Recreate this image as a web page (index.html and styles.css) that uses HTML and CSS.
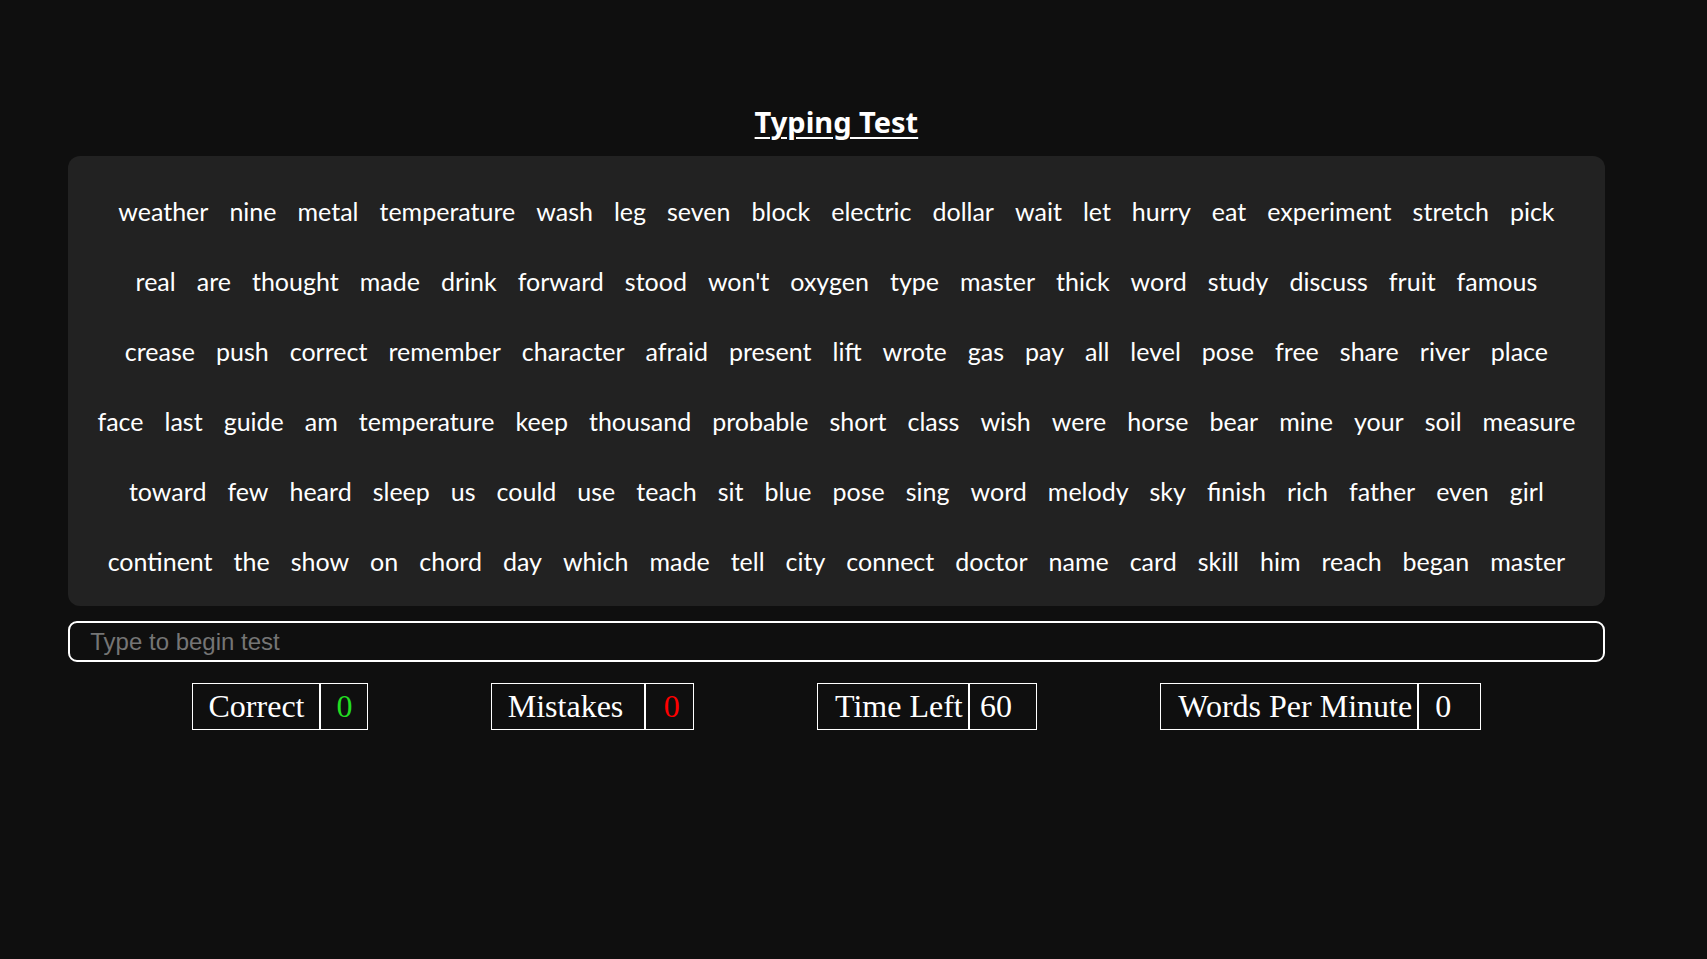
FILE: index.html
```html
<!DOCTYPE html>
<html lang="en">
<head>
<meta charset="utf-8">
<title>Typing Test</title>
<link rel="stylesheet" href="styles.css">
</head>
<body>
<main class="app">
  <h1 class="title">Typing Test</h1>
  <div class="words">
    <span class="word">weather</span><span class="word">nine</span><span class="word">metal</span><span class="word">temperature</span><span class="word">wash</span><span class="word">leg</span><span class="word">seven</span><span class="word">block</span><span class="word">electric</span><span class="word">dollar</span><span class="word">wait</span><span class="word">let</span><span class="word">hurry</span><span class="word">eat</span><span class="word">experiment</span><span class="word">stretch</span><span class="word">pick</span>
    <span class="word">real</span><span class="word">are</span><span class="word">thought</span><span class="word">made</span><span class="word">drink</span><span class="word">forward</span><span class="word">stood</span><span class="word">won't</span><span class="word">oxygen</span><span class="word">type</span><span class="word">master</span><span class="word">thick</span><span class="word">word</span><span class="word">study</span><span class="word">discuss</span><span class="word">fruit</span><span class="word">famous</span>
    <span class="word">crease</span><span class="word">push</span><span class="word">correct</span><span class="word">remember</span><span class="word">character</span><span class="word">afraid</span><span class="word">present</span><span class="word">lift</span><span class="word">wrote</span><span class="word">gas</span><span class="word">pay</span><span class="word">all</span><span class="word">level</span><span class="word">pose</span><span class="word">free</span><span class="word">share</span><span class="word">river</span><span class="word">place</span>
    <span class="word">face</span><span class="word">last</span><span class="word">guide</span><span class="word">am</span><span class="word">temperature</span><span class="word">keep</span><span class="word">thousand</span><span class="word">probable</span><span class="word">short</span><span class="word">class</span><span class="word">wish</span><span class="word">were</span><span class="word">horse</span><span class="word">bear</span><span class="word">mine</span><span class="word">your</span><span class="word">soil</span><span class="word">measure</span>
    <span class="word">toward</span><span class="word">few</span><span class="word">heard</span><span class="word">sleep</span><span class="word">us</span><span class="word">could</span><span class="word">use</span><span class="word">teach</span><span class="word">sit</span><span class="word">blue</span><span class="word">pose</span><span class="word">sing</span><span class="word">word</span><span class="word">melody</span><span class="word">sky</span><span class="word">finish</span><span class="word">rich</span><span class="word">father</span><span class="word">even</span><span class="word">girl</span>
    <span class="word">continent</span><span class="word">the</span><span class="word">show</span><span class="word">on</span><span class="word">chord</span><span class="word">day</span><span class="word">which</span><span class="word">made</span><span class="word">tell</span><span class="word">city</span><span class="word">connect</span><span class="word">doctor</span><span class="word">name</span><span class="word">card</span><span class="word">skill</span><span class="word">him</span><span class="word">reach</span><span class="word">began</span><span class="word">master</span>
  </div>
  <input class="type-input" type="text" placeholder="Type to begin test">
  <div class="stats">
    <div class="stat stat-correct"><span class="stat-label">Correct</span><span class="stat-value good">0</span></div>
    <div class="stat stat-mistakes"><span class="stat-label">Mistakes</span><span class="stat-value bad">0</span></div>
    <div class="stat stat-time"><span class="stat-label">Time Left</span><span class="stat-value">60</span></div>
    <div class="stat stat-wpm"><span class="stat-label">Words Per Minute</span><span class="stat-value">0</span></div>
  </div>
</main>
</body>
</html>
```

FILE: styles.css
```css
html, body {
  margin: 0;
  padding: 0;
  background: #0f0f0f;
  color: #ffffff;
}

body {
  min-height: 959px;
}

.app {
  width: 90%;
  margin-left: 4%;
  padding-top: 102px;
  display: flex;
  flex-direction: column;
}

.title {
  margin: 0 0 14px;
  height: 40px;
  line-height: 40px;
  text-align: center;
  font-family: "Noto Sans", "Open Sans", sans-serif;
  font-weight: 700;
  font-size: 29px;
  text-decoration: underline;
  text-decoration-thickness: 2px;
  text-underline-offset: 4px;
}

.words {
  box-sizing: border-box;
  height: 450px;
  background: #222222;
  border-radius: 12px;
  padding: 20px 27px 10px;
  display: flex;
  flex-wrap: wrap;
  justify-content: center;
  align-content: flex-start;
  column-gap: 21px;
  font-family: Lato, "Noto Sans", sans-serif;
  font-size: 25px;
}

.word {
  line-height: 70px;
  color: #ffffff;
}

.type-input {
  box-sizing: border-box;
  margin-top: 15px;
  height: 41px;
  width: 100%;
  padding: 0 20px;
  background: #0f0f0f;
  color: #ffffff;
  border: 2px solid #ffffff;
  border-radius: 9px;
  font-family: "Liberation Sans", Arial, sans-serif;
  font-size: 24px;
  outline: none;
}

.type-input::placeholder {
  color: #757575;
}

.stats {
  margin-top: 21px;
  display: flex;
  justify-content: space-evenly;
  font-family: "Liberation Serif", "Times New Roman", serif;
  font-size: 32px;
}

.stat {
  display: flex;
}

.stat-label,
.stat-value {
  box-sizing: border-box;
  height: 47px;
  line-height: 45px;
  border: 1px solid #ffffff;
  padding-left: 16px;
  white-space: nowrap;
}

.good { color: #22dd22; }
.bad { color: #ff0000; }

.stat-correct .stat-label { width: 128px; }
.stat-correct .stat-value { width: 48px; }

.stat-mistakes .stat-label { width: 154px; }
.stat-mistakes .stat-value { width: 49px; padding-left: 18px; }

.stat-time .stat-label { width: 152px; padding-left: 17px; }
.stat-time .stat-value { width: 68px; padding-left: 10px; }

.stat-wpm .stat-label { width: 258px; padding-left: 17px; }
.stat-wpm .stat-value { width: 63px; padding-left: 16px; }
```
